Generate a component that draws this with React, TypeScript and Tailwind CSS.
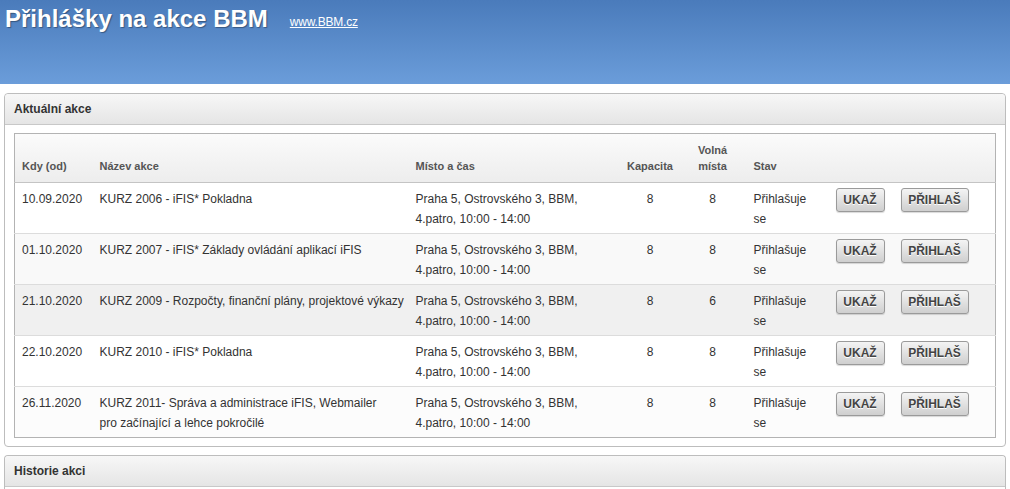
import React from "react";

const rows = [
  { d: "10.09.2020", n: ["KURZ 2006 - iFIS* Pokladna"], k: "8", v: "8" },
  { d: "01.10.2020", n: ["KURZ 2007 - iFIS* Základy ovládání aplikací iFIS"], k: "8", v: "8" },
  { d: "21.10.2020", n: ["KURZ 2009 - Rozpočty, finanční plány, projektové výkazy"], k: "8", v: "6" },
  { d: "22.10.2020", n: ["KURZ 2010 - iFIS* Pokladna"], k: "8", v: "8" },
  { d: "26.11.2020", n: ["KURZ 2011- Správa a administrace iFIS, Webmailer", "pro začínající a lehce pokročilé"], k: "8", v: "8" },
];

const rowBg = ["bg-white", "bg-[#f9f9f9]", "bg-[#f0f0f0]", "bg-white", "bg-[#fcfcfc]"];

function Btn({ children, w }: { children: React.ReactNode; w: string }) {
  return (
    <button
      className={`${w} h-[24px] rounded-[3px] border border-[#9a9a9a] bg-gradient-to-b from-[#f4f4f4] to-[#cfcfcf] text-[12px] font-bold text-[#444] leading-none shadow-[0_1px_1px_rgba(0,0,0,0.15)] [text-shadow:0_1px_0_#fff]`}
    >
      {children}
    </button>
  );
}

export default function App() {
  return (
    <div className="min-h-[489px] bg-white text-[#333]" style={{ fontFamily: '"Liberation Sans", Arial, sans-serif' }}>
      <div className="h-[84px] bg-gradient-to-b from-[#4a7bbb] to-[#6b9dda] flex items-start pl-[5px] pt-[4px]">
        <h1 className="text-[24px] font-bold text-white leading-[30px] [text-shadow:1px_1px_1px_rgba(0,0,0,0.35)]">
          Přihlášky na akce BBM
        </h1>
        <a href="#" className="ml-[22px] mt-[10px] text-[12px] tracking-[-0.2px] text-white underline leading-[16px]">
          www.BBM.cz
        </a>
      </div>

      <div className="px-[4px] pt-[9px]">
        <div className="rounded-[4px] border border-[#bdbdbd] bg-white">
          <div className="h-[31px] rounded-t-[4px] border-b border-[#c8c8c8] bg-gradient-to-b from-[#f7f7f7] to-[#e5e5e5] pl-[9px] flex items-center text-[12px] font-bold text-[#333]">
            Aktuální akce
          </div>
          <div className="px-[9px] pt-[8px] pb-[8px]">
            <table className="w-full table-fixed border-collapse border border-[#b3b3b3] text-[12px]">
              <colgroup>
                <col className="w-[78px]" />
                <col className="w-[316px]" />
                <col className="w-[213px]" />
                <col className="w-[57px]" />
                <col className="w-[68px]" />
                <col className="w-[82px]" />
                <col className="w-[65px]" />
                <col />
              </colgroup>
              <thead>
                <tr className="h-[49px] bg-gradient-to-b from-[#fbfbfb] to-[#ededed] border-b border-[#c4c4c4] text-[11px] font-bold text-[#555] leading-[16px]">
                  <th className="text-left align-bottom pl-[7px] pb-[8px] font-bold">Kdy (od)</th>
                  <th className="text-left align-bottom pl-[7px] pb-[8px] font-bold">Název akce</th>
                  <th className="text-left align-bottom pl-[7px] pb-[8px] font-bold">Místo a čas</th>
                  <th className="text-center align-bottom pb-[8px] font-bold">Kapacita</th>
                  <th className="text-center align-bottom pb-[8px] font-bold">Volná<br />místa</th>
                  <th className="text-left align-bottom pl-[7px] pb-[8px] font-bold">Stav</th>
                  <th></th>
                  <th></th>
                </tr>
              </thead>
              <tbody>
                {rows.map((r, i) => (
                  <tr key={i} className={`${rowBg[i]} ${i < rows.length - 1 ? "border-b border-[#dcdcdc]" : ""} leading-[20px] align-top`}>
                    <td className="pl-[7px] pt-[6px] pb-[4px]">{r.d}</td>
                    <td className="pl-[7px] pt-[6px] pb-[4px]">
                      {r.n.map((l, j) => (
                        <div key={j} className="whitespace-nowrap">{l}</div>
                      ))}
                    </td>
                    <td className="pl-[7px] pt-[6px] pb-[4px] whitespace-nowrap">
                      Praha 5, Ostrovského 3, BBM,
                      <br />
                      4.patro, 10:00 - 14:00
                    </td>
                    <td className="text-center pt-[6px] pb-[4px]">{r.k}</td>
                    <td className="text-center pt-[6px] pb-[4px]">{r.v}</td>
                    <td className="pl-[7px] pt-[6px] pb-[4px]">
                      Přihlašuje
                      <br />
                      se
                    </td>
                    <td className="pl-[7px] pt-[5px]">
                      <Btn w="w-[49px]">UKAŽ</Btn>
                    </td>
                    <td className="pl-[7px] pt-[5px]">
                      <Btn w="w-[68px]">PŘIHLAŠ</Btn>
                    </td>
                  </tr>
                ))}
              </tbody>
            </table>
          </div>
        </div>

        <div className="mt-[8px] rounded-t-[4px] border border-b-0 border-[#bdbdbd]">
          <div className="h-[31px] rounded-t-[4px] border-b border-[#c8c8c8] bg-gradient-to-b from-[#f7f7f7] to-[#e5e5e5] pl-[9px] flex items-center text-[12px] font-bold text-[#333]">
            Historie akci
          </div>
          <div className="h-[20px]"></div>
        </div>
      </div>
    </div>
  );
}
